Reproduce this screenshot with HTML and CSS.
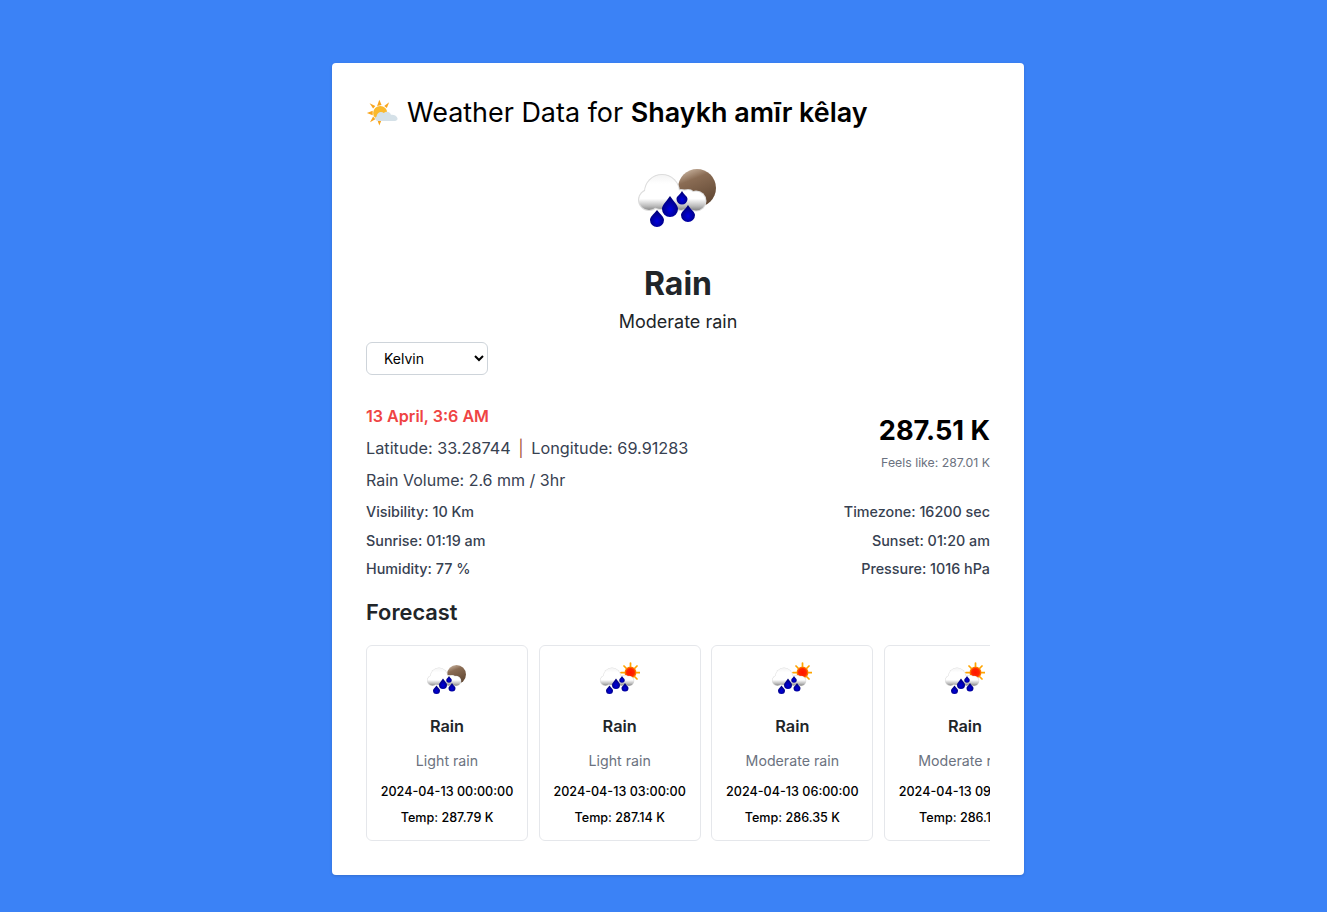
FILE: index.html
```html
<!DOCTYPE html>
<html>
<head>
    <title>Weather Data</title>
    <link rel="stylesheet" href="styles.css">
</head>
<body>
    <!-- Iconos reutilizables -->
    <svg class="icon-defs" width="0" height="0" aria-hidden="true">
        <defs>
            <linearGradient id="cloudFill" gradientUnits="userSpaceOnUse" x1="0" y1="20" x2="0" y2="56">
                <stop offset="0" stop-color="#f4f4f4"/>
                <stop offset="0.25" stop-color="#fff"/>
                <stop offset="0.66" stop-color="#fff"/>
                <stop offset="0.86" stop-color="#bcbcbc"/>
                <stop offset="1" stop-color="#7e7e7e"/>
            </linearGradient>
            <linearGradient id="moonFill" x1="0.2" y1="0" x2="0.6" y2="1">
                <stop offset="0" stop-color="#cbb6a2"/>
                <stop offset="0.3" stop-color="#8a6c54"/>
                <stop offset="1" stop-color="#5f4632"/>
            </linearGradient>
            <radialGradient id="sunFill">
                <stop offset="0" stop-color="#ff1400"/>
                <stop offset="0.65" stop-color="#ff2800"/>
                <stop offset="1" stop-color="#ff9a00"/>
            </radialGradient>
            <radialGradient id="dropFill" cx="0.5" cy="0.65" r="0.6">
                <stop offset="0" stop-color="#0000e0"/>
                <stop offset="1" stop-color="#000070"/>
            </radialGradient>
            <g id="rainCloud">
                <g fill="#dcdcdc">
                    <circle cx="24" cy="37" r="18"/>
                    <circle cx="11" cy="45" r="11"/>
                    <circle cx="43" cy="45" r="11"/>
                    <circle cx="58" cy="46" r="10.500"/>
                    <circle cx="50" cy="42" r="8"/>
                </g>
                <g fill="url(#cloudFill)">
                    <circle cx="24" cy="37" r="17"/>
                    <circle cx="11" cy="45" r="10"/>
                    <circle cx="43" cy="45" r="10"/>
                    <circle cx="58" cy="46" r="9.500"/>
                    <circle cx="50" cy="42" r="7"/>
                </g>
                <path d="M19 55 C15 60 12 62 12 65 A7 7 0 0 0 26 65 C26 62 23 60 19 55 Z" fill="url(#dropFill)"/>
                <path d="M32 41 C28 47 24 50 24 54 A8 8 0 0 0 40 54 C40 50 36 47 32 41 Z" fill="url(#dropFill)"/>
                <path d="M44 36 C42 40 38.500 41 38.500 44 A5.500 5.500 0 0 0 49.500 44 C49.500 41 46 40 44 36 Z" fill="url(#dropFill)"/>
                <path d="M50 50 C47 55 43 57 43 60 A7 7 0 0 0 57 60 C57 57 53 55 50 50 Z" fill="url(#dropFill)"/>
            </g>
            <symbol id="rainNight" viewBox="0 0 80 80">
                <circle cx="59" cy="33" r="19" fill="url(#moonFill)"/>
                <use href="#rainCloud"/>
            </symbol>
            <symbol id="rainDay" viewBox="0 0 80 80">
                <g stroke="#ffa500" stroke-width="3.500" stroke-linecap="round">
                    <path d="M61 10 V17 M61 41 V48 M42 29 H49 M73 29 H80 M48 16 L52 20 M74 16 L70 20 M48 42 L52 38 M74 42 L70 38"/>
                </g>
                <circle cx="61" cy="29" r="12" fill="url(#sunFill)"/>
                <use href="#rainCloud"/>
            </symbol>
            <symbol id="sunCloud" viewBox="0 0 36 36">
                <g fill="#f9a51c">
                    <path d="M15 3 L17.500 9 L12.500 10 Z"/>
                    <path d="M15 32 L17.500 26 L12.500 25 Z"/>
                    <path d="M1 18 L7.500 15.500 L7.500 20.500 Z"/>
                    <path d="M4 7 L10.500 10 L8 13 Z"/>
                    <path d="M26 6 L20.500 10 L23.500 12.500 Z"/>
                    <path d="M4.500 28.500 L10.500 25 L8 22 Z"/>
                </g>
                <circle cx="16" cy="18" r="8" fill="#fbb92c"/>
                <path d="M14 27 C10 27 9 23 12 22 C12 18 17 15 20 18 C23 15 28 17 28 20 C33 19 36 23 35.500 25 C35 26.500 33 27 31 27 Z" fill="#d5e1e8"/>
            </symbol>
        </defs>
    </svg>

    <main class="card">
        <h1 class="title">
            <svg class="title-icon"><use href="#sunCloud"/></svg>
            <span>Weather Data for <b>Shaykh amīr kêlay</b></span>
        </h1>

        <section class="current">
            <svg class="current-icon"><use href="#rainNight"/></svg>
            <h2 class="current-main">Rain</h2>
            <p class="current-desc">Moderate rain</p>
        </section>

        <select class="unit-select">
            <option>Kelvin</option>
            <option>Celsius</option>
            <option>Fahrenheit</option>
        </select>

        <section class="details">
            <div class="details-left">
                <p class="date">13 April, 3:6 AM</p>
                <p class="line coords">Latitude: 33.28744 <span class="divider">|</span> Longitude: 69.91283</p>
                <p class="line">Rain Volume: 2.6 mm / 3hr</p>
            </div>
            <div class="details-right">
                <p class="temp">287.51 K</p>
                <p class="feels">Feels like: 287.01 K</p>
            </div>
        </section>

        <section class="stats">
            <p>Visibility: 10 Km</p>
            <p class="right">Timezone: 16200 sec</p>
            <p>Sunrise: 01:19 am</p>
            <p class="right">Sunset: 01:20 am</p>
            <p>Humidity: 77 %</p>
            <p class="right">Pressure: 1016 hPa</p>
        </section>

        <h3 class="forecast-title">Forecast</h3>
        <div class="forecast">
            <article class="day">
                <svg class="day-icon"><use href="#rainNight"/></svg>
                <h4>Rain</h4>
                <p class="day-desc">Light rain</p>
                <p class="day-date">2024-04-13 00:00:00</p>
                <p class="day-temp">Temp: 287.79 K</p>
            </article>
            <article class="day">
                <svg class="day-icon"><use href="#rainDay"/></svg>
                <h4>Rain</h4>
                <p class="day-desc">Light rain</p>
                <p class="day-date">2024-04-13 03:00:00</p>
                <p class="day-temp">Temp: 287.14 K</p>
            </article>
            <article class="day">
                <svg class="day-icon"><use href="#rainDay"/></svg>
                <h4>Rain</h4>
                <p class="day-desc">Moderate rain</p>
                <p class="day-date">2024-04-13 06:00:00</p>
                <p class="day-temp">Temp: 286.35 K</p>
            </article>
            <article class="day">
                <svg class="day-icon"><use href="#rainDay"/></svg>
                <h4>Rain</h4>
                <p class="day-desc">Moderate rain</p>
                <p class="day-date">2024-04-13 09:00:00</p>
                <p class="day-temp">Temp: 286.12 K</p>
            </article>
        </div>
    </main>
</body>
</html>
```

FILE: styles.css
```css
* {
    box-sizing: border-box;
}

body {
    margin: 0;
    min-height: 912px;
    padding: 63px 0 0 332px;
    background-color: #3b82f6;
    font-family: Inter, "Liberation Sans", sans-serif;
    color: #212529;
}

p, h1, h2, h3, h4 {
    margin: 0;
}

.icon-defs {
    position: absolute;
}

.card {
    width: 692px;
    height: 812px;
    padding: 30px 34px;
    background-color: #fff;
    border-radius: 4px;
    box-shadow: 0 1px 3px rgba(0, 0, 0, 0.15);
}

/* Titulo */
.title {
    display: flex;
    align-items: center;
    gap: 9px;
    height: 39px;
    font-size: 26.950px;
    font-weight: 400;
    color: #000;
}

.title b {
    font-weight: 600;
}

.title-icon {
    width: 32px;
    height: 32px;
}

/* Clima actual */
.current {
    text-align: center;
}

.current-icon {
    display: block;
    width: 80px;
    height: 80px;
    margin: 23px auto 0;
    filter: blur(0.7px);
}

.current-main {
    margin-top: 29px;
    font-size: 32px;
    line-height: 39px;
    font-weight: 700;
}

.current-desc {
    margin-top: 5px;
    font-size: 18px;
    line-height: 27px;
}

.unit-select {
    display: block;
    width: 122px;
    height: 33px;
    margin-top: 7px;
    padding: 0 13px;
    background-color: #fff;
    border: 1px solid #ced4da;
    border-radius: 6px;
    font-family: inherit;
    font-size: 14px;
    color: #000;
}

/* Datos */
.details {
    display: flex;
    justify-content: space-between;
    margin-top: 25px;
}

.date {
    font-size: 16.100px;
    line-height: 32px;
    font-weight: 600;
    color: #ef4444;
}

.line {
    font-size: 16px;
    line-height: 32px;
    color: #374151;
}

.coords {
    font-size: 16.250px;
}

.divider {
    margin: 0 3px;
    color: #a8583f;
}

.details-right {
    text-align: right;
}

.temp {
    margin-top: 13px;
    font-size: 27.200px;
    line-height: 36px;
    font-weight: 700;
    color: #000;
}

.feels {
    margin-top: 5px;
    font-size: 12.300px;
    line-height: 18px;
    color: #6b7280;
}

.stats {
    display: grid;
    grid-template-columns: 1fr 1fr;
    grid-auto-rows: 28.500px;
    margin-top: 2px;
    font-size: 14.350px;
    line-height: 28.500px;
    font-weight: 500;
    color: #374151;
}

.right {
    text-align: right;
}

/* Pronostico */
.forecast-title {
    margin-top: 11px;
    font-size: 21.800px;
    line-height: 34px;
    font-weight: 600;
}

.forecast {
    display: flex;
    gap: 10.670px;
    margin-top: 16px;
    overflow: hidden;
}

.day {
    flex: 0 0 162px;
    height: 196px;
    padding-top: 12px;
    border: 1px solid #e5e7eb;
    border-radius: 6px;
    text-align: center;
    white-space: nowrap;
}

.day-icon {
    display: block;
    width: 40px;
    height: 40px;
    margin: 0 auto;
    filter: blur(0.35px);
}

.day h4 {
    margin-top: 16px;
    font-size: 16.300px;
    line-height: 24px;
    font-weight: 600;
}

.day-desc {
    margin-top: 12px;
    font-size: 14.200px;
    line-height: 21px;
    color: #6b7280;
}

.day-date {
    margin-top: 11px;
    font-size: 12.600px;
    line-height: 20px;
    font-weight: 500;
    color: #000;
}

.day-temp {
    margin-top: 7px;
    font-size: 12.600px;
    line-height: 18px;
    font-weight: 500;
    color: #000;
}
```
